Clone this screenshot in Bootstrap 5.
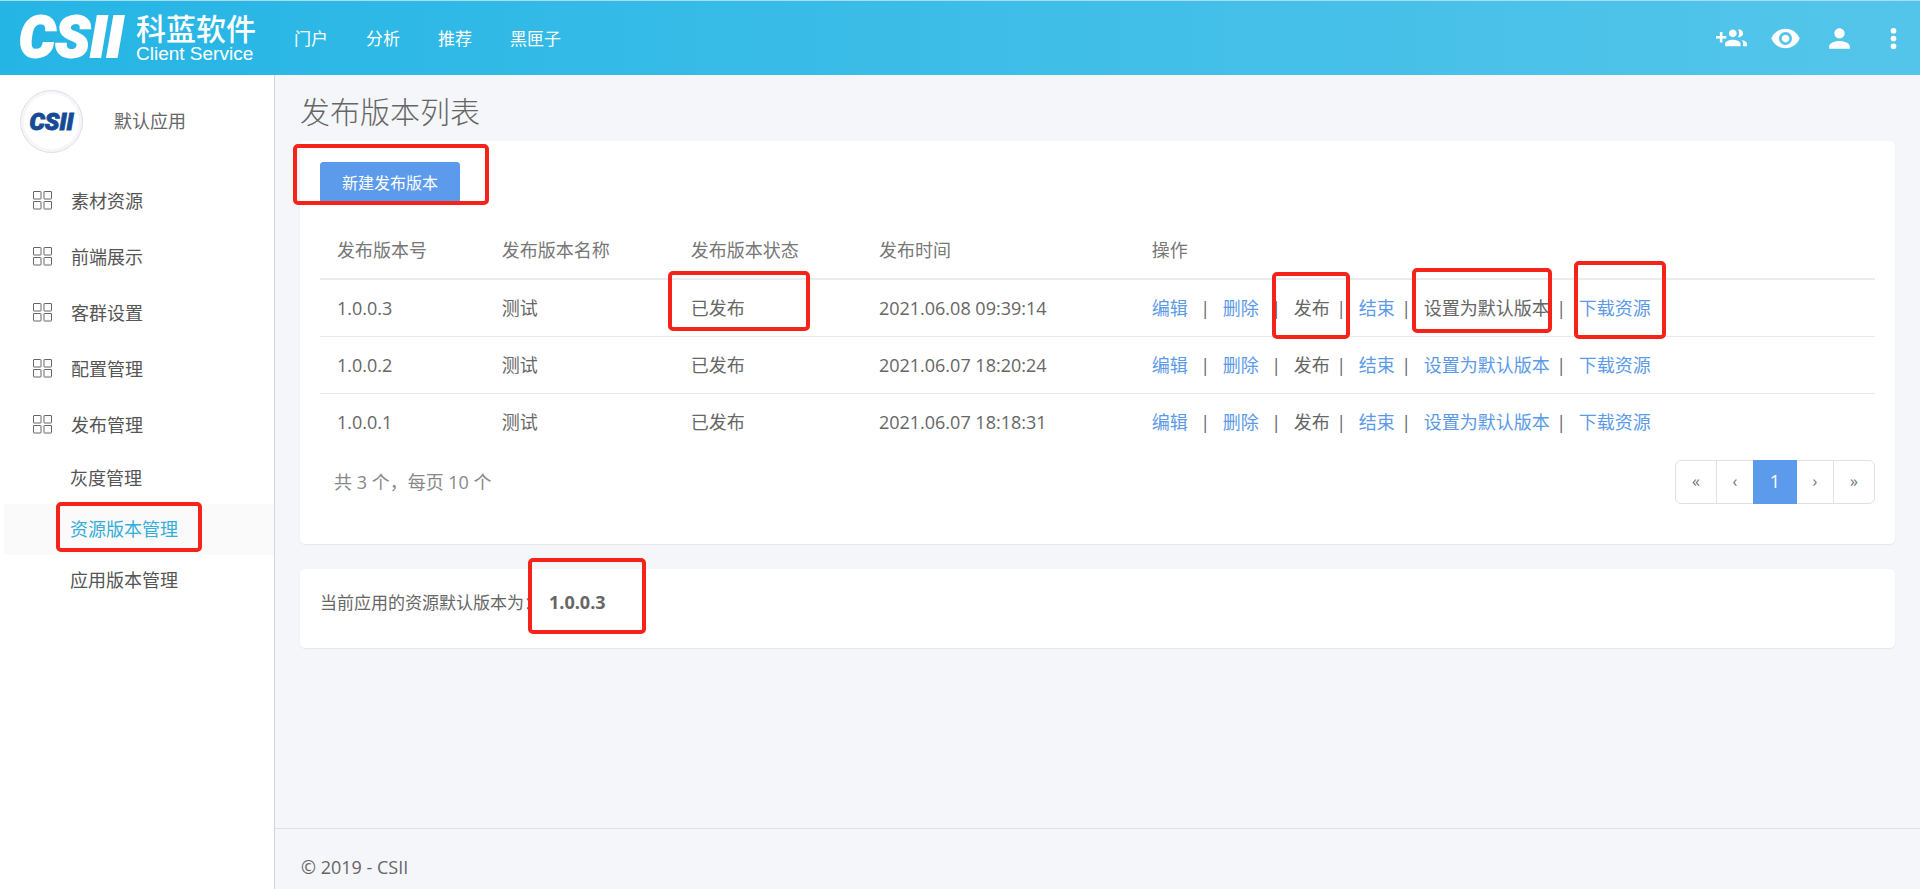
<!DOCTYPE html>
<html lang="zh-CN">
<head>
<meta charset="utf-8">
<meta name="viewport" content="width=device-width, initial-scale=1">
<title>发布版本列表</title>
<link href="https://cdn.jsdelivr.net/npm/bootstrap@5.3.0/dist/css/bootstrap.min.css" rel="stylesheet">
<style>
body{font-family:"Open Sans","Noto Sans CJK SC",sans-serif;font-size:18px;line-height:27px;font-weight:400;color:#666;background:#f5f6fa}
a{text-decoration:none;color:#5c9ae8}
.topbar{height:75px;background:linear-gradient(90deg,#25b5e5,#54c5ea);border-top:1px solid #a9def2;padding:0 11px 0 19px}
.brand{color:#fff;width:275px}
.csii{font-family:Roboto,"Liberation Sans",sans-serif;font-weight:900;font-style:italic}
.brand .csii{font-size:57px;line-height:58px;-webkit-text-stroke:2px #fff;width:117px}
.brand-cn{font-size:30px;line-height:32px;font-weight:500}
.brand-en{font-family:"Liberation Sans",sans-serif;font-size:19px;line-height:18px}
.topnav{gap:38px;font-size:17px}
.topnav a{color:#fff}
.tools{gap:23px}
.tools button{border:0;background:none;padding:0;width:31px;height:31px;color:#fff;display:block}
.tools svg{display:block;width:31px;height:31px;fill:currentColor}
.shell{min-height:calc(100vh - 75px)}
.side{width:275px;background:#fff;border-right:1px solid #d4d5d9}
.side a{color:#555}
.avatar{width:63px;height:63px;border:1px solid #dcdde6;box-shadow:inset 0 0 0 3px #f5f6fa;color:#164c96}
.avatar .csii{font-size:24px;line-height:24px;-webkit-text-stroke:1px #164c96}
.profile{padding:15px 20px 0;gap:31px;margin-bottom:20px}
.side-item{height:56px;padding-left:33px;gap:19px}
.side-item svg{width:19px;height:19px;fill:none;stroke:#666;margin-bottom:2px}
.side .side-sub{height:51px;padding-left:66px;margin-left:4px}
.side .side-sub.on{background:#fafafa;color:#35add9}
.page{padding:19px 25px 25px}
.page h1{font-size:30px;line-height:36px;font-weight:300;margin-bottom:11px;color:#666}
.panel{background:#fff;border-radius:5px;box-shadow:0 1px 1px #e6e7ec;padding:21px 20px}
.panel-list{padding-bottom:40px;margin-bottom:25px}
.panel-default{height:79px;font-size:17px;padding-top:20px}
.panel-default strong{font-size:18px;font-weight:700}
.btn-new{background:#5c9aec;border-color:#5c9aec;color:#fff;font-size:16px;width:140px;height:41px;padding:0;border-radius:3px}
.grid{width:100%;margin-top:19px;border-collapse:separate;border-spacing:0;table-layout:fixed}
.grid th{height:58px;font-weight:400;color:#777;border-bottom:2px solid #ebecef;padding:0 17px}
.grid td{height:57px;border-bottom:1px solid #e9eaed;padding:0 17px;white-space:nowrap}
.grid tr:last-child td{border-bottom-color:transparent}
.sep{width:29px;text-align:center;padding-right:6px}
.sep-wide{width:35px;padding-right:0}
.list-foot{margin-top:9px}
.total{color:#888;padding-left:14px}
.pager .page-link{height:44px;padding:0 0 2px;display:flex;align-items:center;justify-content:center;color:#6c757d;border-color:#dee2e6;font-size:16px;width:42px}
.pager .page-link.slim{width:38px}
.pager .active .page-link{width:44px;font-size:18px;background:#5c9aec;border-color:#5c9aec;color:#fff}
.foot{border-top:1px solid #dfe1e6;height:61px;padding:25px 26px 0}
/* red call-out frames laid over the interface */
.frame{position:absolute;border:4px solid #f5231a;border-radius:5px;pointer-events:none;z-index:2}
.f-new{left:-27px;top:-18px;width:196px;height:61px}
.f-side{left:52px;top:-2px;width:146px;height:50px}
.f-status{left:-6px;top:-9px;width:142px;height:60px}
.f-publish{left:-22px;top:-23px;width:78px;height:67px}
.f-default{left:-12px;top:-27px;width:140px;height:65px}
.f-download{left:-5px;top:-34px;width:92px;height:78px}
.f-version{left:-21px;top:-32px;width:118px;height:76px}
</style>
</head>
<body>
<header class="topbar d-flex align-items-center">
  <div class="brand d-flex align-items-center">
    <span class="csii">CSII</span>
    <span class="d-flex flex-column"><span class="brand-cn">科蓝软件</span><span class="brand-en">Client Service</span></span>
  </div>
  <nav class="topnav d-flex"><a href="#">门户</a><a href="#">分析</a><a href="#">推荐</a><a href="#">黑匣子</a></nav>
  <div class="tools d-flex ms-auto">
    <button type="button" aria-label="添加成员"><svg viewBox="0 0 24 24"><path d="M8 10H5V7H3v3H0v2h3v3h2v-3h3v-2zm10 1c1.66 0 2.99-1.34 2.99-3S19.66 5 18 5c-.32 0-.63.05-.91.14.57.81.9 1.79.9 2.86s-.34 2.04-.9 2.86c.28.09.59.14.91.14zm-5 0c1.66 0 2.99-1.34 2.99-3S14.66 5 13 5c-1.66 0-3 1.34-3 3s1.34 3 3 3zm6.62 2.16c.83.73 1.38 1.66 1.38 2.84v2h3v-2c0-1.54-2.37-2.49-4.38-2.84zM13 13c-2 0-6 1-6 3v2h12v-2c0-2-4-3-6-3z"/></svg></button>
    <button type="button" aria-label="查看"><svg viewBox="0 0 24 24"><path d="M12 4.500C7 4.500 2.730 7.610 1 12c1.730 4.390 6 7.500 11 7.500s9.270-3.110 11-7.500c-1.730-4.390-6-7.500-11-7.500zM12 17c-2.760 0-5-2.240-5-5s2.240-5 5-5 5 2.240 5 5-2.240 5-5 5zm0-8c-1.660 0-3 1.340-3 3s1.340 3 3 3 3-1.340 3-3-1.340-3-3-3z"/></svg></button>
    <button type="button" aria-label="用户"><svg viewBox="0 0 24 24"><path d="M12 12c2.210 0 4-1.790 4-4s-1.790-4-4-4-4 1.790-4 4 1.790 4 4 4zm0 2c-2.670 0-8 1.340-8 4v2h16v-2c0-2.660-5.330-4-8-4z"/></svg></button>
    <button type="button" aria-label="更多"><svg viewBox="0 0 24 24"><circle cx="12" cy="6" r="2.200"/><circle cx="12" cy="12" r="2.200"/><circle cx="12" cy="18" r="2.200"/></svg></button>
  </div>
</header>
<svg class="d-none"><symbol id="tiles" viewBox="0 0 19 19"><rect x=".5" y=".5" width="7.500" height="7.500" rx=".5"/><rect x="11" y=".5" width="7.500" height="7.500" rx=".5"/><rect x=".5" y="10.500" width="7.500" height="7.500" rx=".5"/><rect x="11" y="10.500" width="7.500" height="7.500" rx=".5"/></symbol></svg>
<div class="shell d-flex">
  <aside class="side flex-shrink-0">
    <div class="profile d-flex align-items-center">
      <div class="avatar rounded-circle d-flex align-items-center justify-content-center"><span class="csii">CSII</span></div>
      <span>默认应用</span>
    </div>
    <nav class="d-flex flex-column">
      <a href="#" class="side-item d-flex align-items-center"><svg><use href="#tiles"/></svg>素材资源</a>
      <a href="#" class="side-item d-flex align-items-center"><svg><use href="#tiles"/></svg>前端展示</a>
      <a href="#" class="side-item d-flex align-items-center"><svg><use href="#tiles"/></svg>客群设置</a>
      <a href="#" class="side-item d-flex align-items-center"><svg><use href="#tiles"/></svg>配置管理</a>
      <a href="#" class="side-item d-flex align-items-center"><svg><use href="#tiles"/></svg>发布管理</a>
      <a href="#" class="side-sub d-flex align-items-center">灰度管理</a>
      <a href="#" class="side-sub on d-flex align-items-center position-relative">资源版本管理<span class="frame f-side"></span></a>
      <a href="#" class="side-sub d-flex align-items-center">应用版本管理</a>
    </nav>
  </aside>
  <div class="flex-grow-1 d-flex flex-column">
    <main class="page">
      <h1>发布版本列表</h1>
      <section class="panel panel-list">
        <div class="d-flex"><div class="position-relative d-flex"><button type="button" class="btn btn-new">新建发布版本</button><span class="frame f-new"></span></div></div>
        <table class="grid">
          <colgroup><col style="width:10.6%"><col style="width:12.15%"><col style="width:12.1%"><col style="width:17.55%"><col></colgroup>
          <thead><tr><th>发布版本号</th><th>发布版本名称</th><th>发布版本状态</th><th>发布时间</th><th>操作</th></tr></thead>
          <tbody>
            <tr><td>1.0.0.3</td><td>测试</td><td class="position-relative">已发布<span class="frame f-status"></span></td><td>2021.06.08 09:39:14</td>
              <td><div class="d-flex"><a href="#">编辑</a><span class="sep sep-wide">|</span><a href="#">删除</a><span class="sep sep-wide">|</span><span class="position-relative">发布<span class="frame f-publish"></span></span><span class="sep">|</span><a href="#">结束</a><span class="sep">|</span><span class="position-relative">设置为默认版本<span class="frame f-default"></span></span><span class="sep">|</span><a href="#" class="position-relative">下载资源<span class="frame f-download"></span></a></div></td></tr>
            <tr><td>1.0.0.2</td><td>测试</td><td>已发布</td><td>2021.06.07 18:20:24</td>
              <td><div class="d-flex"><a href="#">编辑</a><span class="sep sep-wide">|</span><a href="#">删除</a><span class="sep sep-wide">|</span><span>发布</span><span class="sep">|</span><a href="#">结束</a><span class="sep">|</span><a href="#">设置为默认版本</a><span class="sep">|</span><a href="#">下载资源</a></div></td></tr>
            <tr><td>1.0.0.1</td><td>测试</td><td>已发布</td><td>2021.06.07 18:18:31</td>
              <td><div class="d-flex"><a href="#">编辑</a><span class="sep sep-wide">|</span><a href="#">删除</a><span class="sep sep-wide">|</span><span>发布</span><span class="sep">|</span><a href="#">结束</a><span class="sep">|</span><a href="#">设置为默认版本</a><span class="sep">|</span><a href="#">下载资源</a></div></td></tr>
          </tbody>
        </table>
        <div class="list-foot d-flex align-items-center justify-content-between">
          <span class="total">共 3 个，每页 10 个</span>
          <ul class="pagination pager mb-0">
            <li class="page-item"><a class="page-link" href="#">«</a></li>
            <li class="page-item"><a class="page-link slim" href="#">‹</a></li>
            <li class="page-item active"><a class="page-link" href="#">1</a></li>
            <li class="page-item"><a class="page-link slim" href="#">›</a></li>
            <li class="page-item"><a class="page-link" href="#">»</a></li>
          </ul>
        </div>
      </section>
      <section class="panel panel-default">当前应用的资源默认版本为：<strong class="position-relative ms-2">1.0.0.3<span class="frame f-version"></span></strong></section>
    </main>
    <footer class="foot mt-auto">© 2019 - CSII</footer>
  </div>
</div>
<script src="https://cdn.jsdelivr.net/npm/bootstrap@5.3.0/dist/js/bootstrap.bundle.min.js"></script>
</body>
</html>
